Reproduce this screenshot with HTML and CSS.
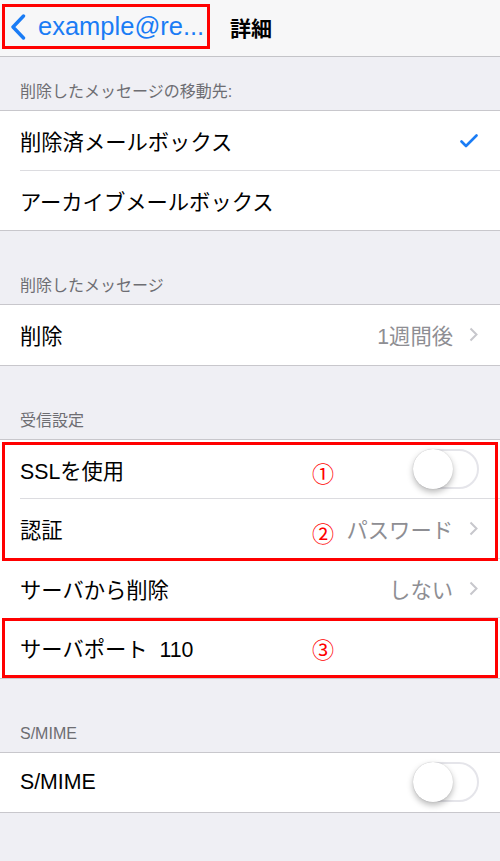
FILE: index.html
```html
<!DOCTYPE html>
<html lang="ja">

<head>
    <meta charset="UTF-8">
    <meta name="viewport" content="width=device-width, initial-scale=1.0">
    <title>詳細</title>
    <link rel="stylesheet" href="styles.css">
</head>

<body>
    <div class="nav">
        <a class="back" href="#">
            <svg class="back-icon" width="16" height="26" viewBox="0 0 16 26">
                <polyline points="13.5,2 3,13 13.5,24" fill="none" stroke="#1a7cf5" stroke-width="3.4" stroke-linecap="round" stroke-linejoin="round"/>
            </svg>
            <span>example@re...</span>
        </a>
        <div class="nav-title">詳細</div>
    </div>

    <div class="section-title first">削除したメッセージの移動先:</div>
    <div class="group">
        <div class="row">
            <span class="label">削除済メールボックス</span>
            <svg class="check" width="18" height="14" viewBox="0 0 18 14">
                <polyline points="1.5,7.5 6,12 16.5,1.5" fill="none" stroke="#1a7cf5" stroke-width="2.6" stroke-linecap="round" stroke-linejoin="round"/>
            </svg>
        </div>
        <div class="row">
            <span class="label">アーカイブメールボックス</span>
        </div>
    </div>

    <div class="section-title">削除したメッセージ</div>
    <div class="group">
        <div class="row">
            <span class="label">削除</span>
            <span class="value">1週間後</span>
            <svg class="chevron" width="9" height="15" viewBox="0 0 9 15">
                <polyline points="1.5,1.5 7.5,7.5 1.5,13.5" fill="none" stroke="#c7c7cc" stroke-width="2"/>
            </svg>
        </div>
    </div>

    <div class="section-title">受信設定</div>
    <div class="group">
        <div class="mark">
            <div class="row">
                <span class="label">SSLを使用</span>
                <span class="num num-low">①</span>
                <span class="toggle"><span class="knob"></span></span>
            </div>
            <div class="row">
                <span class="label">認証</span>
                <span class="num num-low">②</span>
                <span class="value">パスワード</span>
                <svg class="chevron" width="9" height="15" viewBox="0 0 9 15">
                    <polyline points="1.5,1.5 7.5,7.5 1.5,13.5" fill="none" stroke="#c7c7cc" stroke-width="2"/>
                </svg>
            </div>
        </div>
        <div class="row">
            <span class="label">サーバから削除</span>
            <span class="value">しない</span>
            <svg class="chevron" width="9" height="15" viewBox="0 0 9 15">
                <polyline points="1.5,1.5 7.5,7.5 1.5,13.5" fill="none" stroke="#c7c7cc" stroke-width="2"/>
            </svg>
        </div>
        <div class="mark mark-last">
            <div class="row">
                <span class="label">サーバポート&nbsp;&nbsp;110</span>
                <span class="num">③</span>
            </div>
        </div>
    </div>

    <div class="section-title">S/MIME</div>
    <div class="group">
        <div class="row">
            <span class="label">S/MIME</span>
            <span class="toggle"><span class="knob"></span></span>
        </div>
    </div>
</body>

</html>
```

FILE: styles.css
```css
* {
    margin: 0;
    padding: 0;
    box-sizing: border-box;
}

body {
    background: #efeff4;
    font-family: 'Liberation Sans', 'Noto Sans CJK JP', sans-serif;
    color: #000;
    width: 500px;
    min-height: 861px;
}

/* ナビバー */
.nav {
    height: 57px;
    display: flex;
    align-items: flex-start;
    padding-left: 2px;
    background: #f7f7f8;
    border-bottom: 1px solid #c4c4c8;
}

.back {
    display: flex;
    align-items: center;
    gap: 12px;
    width: 208px;
    height: 45px;
    margin-top: 4px;
    padding-left: 5px;
    border: 3px solid #ff0000;
    color: #1a7cf5;
    font-size: 25.5px;
    text-decoration: none;
    white-space: nowrap;
}

.back span {
    margin-top: -1px;
}

.nav-title {
    align-self: center;
    margin-left: 20px;
    margin-top: -2px;
    font-size: 21px;
    font-weight: bold;
}

/* セクション */
.section-title {
    padding: 46px 20px 9px;
    font-size: 16px;
    line-height: 18px;
    color: #6d6d72;
}

.section-title.first {
    padding-top: 26px;
}

.group {
    background: #fff;
    border-top: 1px solid #c8c7cc;
    border-bottom: 1px solid #c8c7cc;
}

.row {
    position: relative;
    display: flex;
    align-items: center;
    height: 59.5px;
    padding: 0 22px 0 20px;
    font-size: 21.3px;
}

.row::after {
    content: '';
    position: absolute;
    left: 20px;
    right: 0;
    bottom: 0;
    height: 1px;
    background: #dcdce0;
}

.group > .row:last-child::after,
.mark-last .row::after {
    display: none;
}

.label {
    flex: 1;
}

.value {
    color: #8e8e93;
}

.chevron {
    margin-left: 16px;
}

/* スイッチ */
.toggle {
    position: relative;
    width: 66px;
    height: 40px;
    margin-right: -1px;
    border: 2px solid #e5e5ea;
    border-radius: 20px;
    background: #fff;
}

.knob {
    position: absolute;
    left: -2px;
    top: -2px;
    width: 40px;
    height: 40px;
    border-radius: 50%;
    background: #fff;
    box-shadow: 0 3px 6px rgba(0, 0, 0, 0.28), 0 0 1px rgba(0, 0, 0, 0.2);
}

/* 赤枠と番号 */
.mark {
    position: relative;
}

.mark::before {
    content: '';
    position: absolute;
    top: 2px;
    bottom: -2px;
    left: 2px;
    right: 2px;
    border: 3px solid #ff0000;
    z-index: 2;
    pointer-events: none;
}

.mark-last::before {
    top: 0;
    bottom: 0;
}

.num {
    position: absolute;
    left: 312px;
    top: 50%;
    transform: translateY(-50%);
    font-family: 'Noto Sans CJK JP', sans-serif;
    font-size: 22px;
    color: #ff0000;
}

.num-low {
    transform: translateY(-40%);
}
```
